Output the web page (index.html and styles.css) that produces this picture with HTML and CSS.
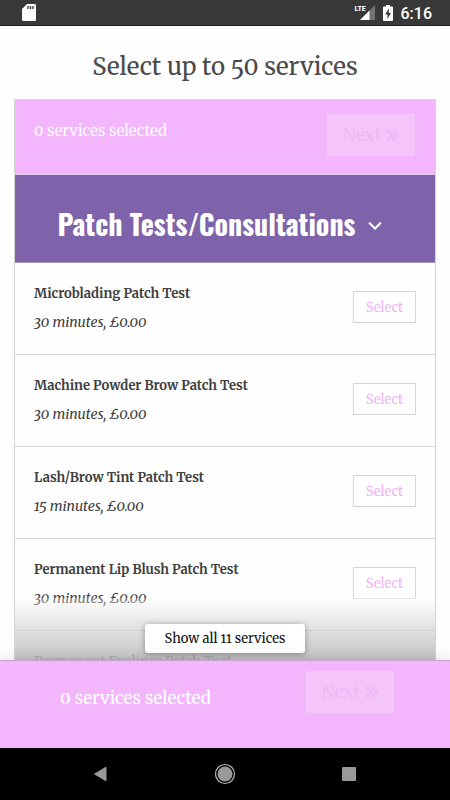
FILE: index.html
```
<!DOCTYPE html>
<html lang="en">
<head>
    <meta charset="UTF-8" />
    <meta name="viewport" content="width=device-width, initial-scale=1.0" />
    <title>Select services</title>
    <link rel="stylesheet" href="styles.css">
</head>
<body>
    <header class="status-bar">
        <svg class="sd-card" width="14" height="17" viewBox="0 0 14 17" aria-hidden="true">
            <path d="M5 0h7.500a1.500 1.500 0 0 1 1.500 1.500v14a1.500 1.500 0 0 1-1.500 1.500h-11A1.500 1.500 0 0 1 0 15.500V5z" fill="#fff" />
            <path d="M6 2v3M8.500 2v3M11 2v3" stroke="#383838" stroke-width="1.400" />
        </svg>
        <div class="status-right">
            <div class="signal">
                <span class="lte">LTE</span>
                <svg width="15" height="15" viewBox="0 0 15 15" aria-hidden="true">
                    <path d="M15 0v15H0z" fill="#737373" />
                    <path d="M9.500 5.500V15H0z" fill="#fff" />
                </svg>
            </div>
            <svg class="battery" width="10" height="16" viewBox="0 0 10 16" aria-hidden="true">
                <path d="M3 0h4v1.500h2a1 1 0 0 1 1 1V15a1 1 0 0 1-1 1H1a1 1 0 0 1-1-1V2.500a1 1 0 0 1 1-1h2z" fill="#fff" />
                <path d="M5.800 3.500L2.200 9.500h2.300V14l3.400-6H5.800z" fill="#383838" />
            </svg>
            <span class="clock">6:16</span>
        </div>
    </header>

    <main class="page">
        <h1>Select up to 50 services</h1>

        <section class="card">
            <div class="summary">
                <span>0 services selected</span>
                <button class="next" disabled>Next
                    <svg width="14" height="12" viewBox="0 0 14 12" aria-hidden="true"><path d="M2 1l5 5-5 5M7.500 1l5 5-5 5" /></svg>
                </button>
            </div>

            <h2>
                <button class="category" aria-expanded="true">Patch Tests/Consultations
                    <svg width="14" height="10" viewBox="0 0 14 10" aria-hidden="true"><path d="M1 1.500l6 6 6-6" /></svg>
                </button>
            </h2>

            <ul class="services">
                <li class="service">
                    <div class="info">
                        <h3>Microblading Patch Test</h3>
                        <p>30 minutes, £0.00</p>
                    </div>
                    <button class="select">Select</button>
                </li>
                <li class="service">
                    <div class="info">
                        <h3>Machine Powder Brow Patch Test</h3>
                        <p>30 minutes, £0.00</p>
                    </div>
                    <button class="select">Select</button>
                </li>
                <li class="service">
                    <div class="info">
                        <h3>Lash/Brow Tint Patch Test</h3>
                        <p>15 minutes, £0.00</p>
                    </div>
                    <button class="select">Select</button>
                </li>
                <li class="service">
                    <div class="info">
                        <h3>Permanent Lip Blush Patch Test</h3>
                        <p>30 minutes, £0.00</p>
                    </div>
                    <button class="select">Select</button>
                </li>
                <li class="service">
                    <div class="info">
                        <h3>Permanent Eyeliner Patch Test</h3>
                    </div>
                </li>
            </ul>

            <div class="fade">
                <button class="show-all">Show all 11 services</button>
            </div>
        </section>
    </main>

    <div class="bottom-bar">
        <span>0 services selected</span>
        <button class="next" disabled>Next
            <svg width="14" height="12" viewBox="0 0 14 12" aria-hidden="true"><path d="M2 1l5 5-5 5M7.500 1l5 5-5 5" /></svg>
        </button>
    </div>

    <nav class="nav-bar">
        <button aria-label="Back">
            <svg width="22" height="22" viewBox="0 0 22 22"><path d="M16.500 4.500v13a.6.6 0 0 1-1 .5L4.500 11.600a.7.7 0 0 1 0-1.200L15.500 4a.6.6 0 0 1 1 .5z" fill="#999" /></svg>
        </button>
        <button aria-label="Home">
            <svg width="22" height="22" viewBox="0 0 22 22"><circle cx="11" cy="11" r="7.500" fill="#999" /><circle cx="11" cy="11" r="9.500" fill="none" stroke="#b5b5b5" stroke-width="1.200" /></svg>
        </button>
        <button aria-label="Recent apps">
            <svg width="22" height="22" viewBox="0 0 22 22"><rect x="4" y="4" width="14" height="14" rx="1" fill="#999" /></svg>
        </button>
    </nav>
</body>
</html>
```
FILE: styles.css
```
:root {
    --pink: #f3b5fc;
    --pink-light: #f5c4fb;
    --pink-text: #efb9f5;
    --purple: #7e63ab;
    --line: #d6d4d6;
    --serif: "Merriweather", "DejaVu Serif Condensed", "DejaVu Serif", serif;
}

* {
    box-sizing: border-box;
    margin: 0;
    padding: 0;
}

body {
    display: flex;
    flex-direction: column;
    height: 100vh;
    overflow: hidden;
    background: #fefefe;
    color: #404040;
    font-family: var(--serif);
    font-variant-numeric: oldstyle-nums;
}

button {
    border: none;
    background: none;
    color: inherit;
    font: inherit;
    cursor: pointer;
}

/* Status bar */
.status-bar {
    display: flex;
    align-items: center;
    justify-content: space-between;
    height: 26px;
    padding: 0 18px 0 22px;
    border-bottom: 1px solid #1c1c1c;
    background: #383838;
    color: #fff;
    font-family: Roboto, sans-serif;
    font-variant-numeric: normal;
}

.status-right {
    display: flex;
    align-items: center;
    gap: 8px;
}

.signal {
    display: flex;
    align-items: flex-end;
    position: relative;
    padding-left: 5px;
}

.lte {
    position: absolute;
    top: 0;
    left: 0;
    font-family: "Liberation Sans Narrow", "Roboto Condensed", Roboto, sans-serif;
    font-size: 8px;
    font-weight: 700;
    line-height: 8px;
}

.clock {
    padding-top: 2px;
    font-size: 16px;
    font-weight: 500;
    line-height: 26px;
}

/* Page */
.page {
    display: flex;
    flex: 1;
    flex-direction: column;
    min-height: 0;
    padding: 0 14px;
}

h1 {
    padding: 21px 0 12px;
    color: #4a4a4a;
    font-size: 24px;
    font-weight: 400;
    line-height: 40px;
    text-align: center;
}

.card {
    position: relative;
    flex: 1;
    min-height: 0;
    overflow: hidden;
    border: 1px solid var(--line);
    border-bottom: none;
}

.summary {
    display: flex;
    justify-content: space-between;
    padding: 14px 20px 18px 19px;
    border-bottom: 1px solid #e3cdee;
    background: var(--pink);
    color: #fff;
    font-size: 15px;
    line-height: 34px;
}

.next {
    display: flex;
    align-items: center;
    justify-content: center;
    gap: 4px;
    width: 88px;
    height: 42px;
    background: var(--pink-light);
    color: var(--pink-text);
    font-size: 17px;
    cursor: default;
}

.next svg {
    fill: none;
    stroke: currentColor;
    stroke-width: 3;
}

.category {
    display: flex;
    align-items: center;
    justify-content: center;
    gap: 13px;
    width: 100%;
    padding: 29px 10px 18px 0;
    border-bottom: 1px solid #a294c0;
    background: var(--purple);
    color: #fff;
    font-family: "Oswald", "Liberation Sans Narrow", "Liberation Sans", sans-serif;
    font-size: 28px;
    font-weight: 700;
    line-height: 40px;
}

.category svg {
    margin-top: 4px;
    fill: none;
    stroke: #fff;
    stroke-width: 2;
}

.services {
    list-style: none;
}

.service {
    display: flex;
    align-items: center;
    justify-content: space-between;
    padding: 15px 19px 18px;
    border-bottom: 1px solid var(--line);
}

.info {
    padding-top: 2px;
    line-height: 28px;
}

.info h3 {
    font-size: 13px;
    font-weight: 700;
}

.info p {
    font-size: 14px;
    font-style: italic;
}

.select {
    width: 63px;
    height: 32px;
    border: 1px solid #d6d6d6;
    background: #fff;
    color: #efb3f5;
    font-size: 13px;
}

/* Collapsed end of the list */
.fade {
    position: absolute;
    right: 0;
    bottom: 0;
    left: 0;
    display: flex;
    align-items: flex-end;
    justify-content: center;
    height: 62px;
    padding-bottom: 7px;
    background: linear-gradient(rgba(255, 255, 255, 0.3), rgba(190, 190, 190, 0.9));
}

.show-all {
    height: 29px;
    padding: 0 20px;
    border-radius: 3px;
    background: #fff;
    box-shadow: 0 1px 6px rgba(0, 0, 0, 0.35);
    color: #111;
    font-size: 13px;
}

/* Fixed summary */
.bottom-bar {
    z-index: 1;
    display: flex;
    justify-content: space-between;
    padding: 10px 56px 22px 60px;
    border-top: 1px solid #c4a6cb;
    background: var(--pink);
    box-shadow: 0 0 14px rgba(0, 0, 0, 0.15);
    color: #fff;
    font-size: 17px;
    line-height: 55px;
}

.nav-bar {
    z-index: 2;
    display: flex;
    align-items: center;
    justify-content: space-between;
    height: 52px;
    padding: 0 90px;
    background: #000;
}

.nav-bar svg {
    display: block;
}
```
